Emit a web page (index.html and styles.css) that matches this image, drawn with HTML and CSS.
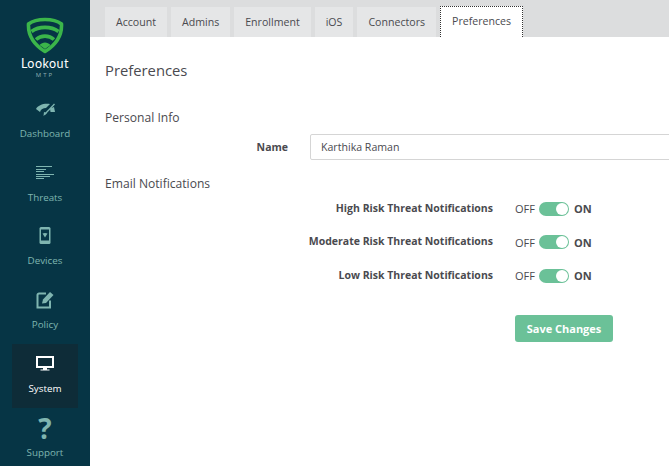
FILE: index.html
```html
<!DOCTYPE html>
<html lang="en">
<head>
    <meta charset="UTF-8">
    <title>Preferences</title>
    <link rel="stylesheet" href="styles.css">
</head>
<body>

    <nav class="sidebar">
        <div class="logo">
            <svg width="38" height="37" viewBox="0 0 38 37">
                <path d="M19 2.500C26 2.500 31.500 4 35.500 7C36 18 31 27 19 34.500C7 27 2 18 2.500 7C6.500 4 12 2.500 19 2.500Z" fill="none" stroke="#3bb54a" stroke-width="3.600" stroke-linejoin="round"/>
                <path d="M5.500 14.500C13 9 25 9 32.500 14.500" fill="none" stroke="#3bb54a" stroke-width="3.600"/>
                <path d="M10 22.500C15 18 23 18 28 22.500" fill="none" stroke="#3bb54a" stroke-width="3.600"/>
                <path d="M13.500 28C16.500 24.500 21.500 24.500 24.500 28L19 32Z" fill="#3bb54a"/>
            </svg>
            <div class="logo-name">Lookout</div>
            <div class="logo-sub">MTP</div>
        </div>
        <a class="nav-item">
            <svg width="20" height="18" viewBox="0 0 20 18">
                <path d="M1 9C3 5 9 3 15 4L11 8C8 8 6 9 5 12Z" fill="#7fb5b0"/>
                <path d="M8.500 16L9 12L12 13Z" fill="#7fb5b0"/>
                <path d="M9.500 14.500L19.500 4" stroke="#7fb5b0" stroke-width="1.300"/>
                <path d="M15 8.500L19 7L20 12H15.500Z" fill="#7fb5b0"/>
            </svg>
            <span>Dashboard</span>
        </a>
        <a class="nav-item">
            <svg width="20" height="18" viewBox="0 0 20 18" fill="none" stroke="#7fb5b0">
                <path d="M1 2.500H17M1 5.500H11M1 7.500H9M1 10.500H19M1 12.500H15M1 14.500H9"/>
            </svg>
            <span>Threats</span>
        </a>
        <a class="nav-item">
            <svg width="20" height="18" viewBox="0 0 20 18">
                <rect x="4.500" y="0" width="11" height="17" rx="1.500" fill="#7fb5b0"/>
                <rect x="6" y="2.500" width="8" height="11" fill="#063545"/>
                <path d="M7.500 6.500C9 5.700 11 5.700 12.500 6.500L10 10.500Z" fill="#7fb5b0"/>
            </svg>
            <span>Devices</span>
        </a>
        <a class="nav-item">
            <svg width="20" height="18" viewBox="0 0 20 18">
                <path d="M11 2.500H4C3.200 2.500 2.500 3.200 2.500 4V16.500H15V9.500" fill="none" stroke="#7fb5b0" stroke-width="2"/>
                <path d="M7 12.500L8 8.500L15 1L18.500 4L11 12Z" fill="#7fb5b0"/>
            </svg>
            <span>Policy</span>
        </a>
        <a class="nav-item active">
            <svg width="20" height="18" viewBox="0 0 20 18">
                <rect x="2" y="2" width="16" height="10" fill="none" stroke="#fff" stroke-width="2"/>
                <path d="M8 13H12V14.500H14.500V15.500H5.500V14.500H8Z" fill="#fff"/>
            </svg>
            <span>System</span>
        </a>
        <a class="nav-item">
            <div class="help">?</div>
            <span>Support</span>
        </a>
    </nav>

    <main class="content">
        <div class="tabs">
            <a class="tab">Account</a>
            <a class="tab">Admins</a>
            <a class="tab">Enrollment</a>
            <a class="tab">iOS</a>
            <a class="tab">Connectors</a>
            <a class="tab selected">Preferences</a>
        </div>

        <div class="page">
            <h1>Preferences</h1>

            <h2 class="info-title">Personal Info</h2>
            <div class="name-row">
                <label>Name</label>
                <input type="text" value="Karthika Raman">
            </div>

            <h2 class="email-title">Email Notifications</h2>
            <div class="setting">
                <label>High Risk Threat Notifications</label>
                <span class="off">OFF</span><span class="switch"></span><span class="on">ON</span>
            </div>
            <div class="setting">
                <label>Moderate Risk Threat Notifications</label>
                <span class="off">OFF</span><span class="switch"></span><span class="on">ON</span>
            </div>
            <div class="setting">
                <label>Low Risk Threat Notifications</label>
                <span class="off">OFF</span><span class="switch"></span><span class="on">ON</span>
            </div>

            <button class="save">Save Changes</button>
        </div>
    </main>

</body>
</html>
```

FILE: styles.css
```css
body {
    margin: 0;
    display: flex;
    height: 466px;
    overflow: hidden;
    font-family: 'Open Sans', sans-serif;
    font-size: 11px;
    color: #4a4a4f;
    background: #fff;
}
.sidebar {
    width: 90px;
    flex: none;
    background: #063545;
    display: flex;
    flex-direction: column;
    align-items: center;
}
.logo {
    height: 89px;
    flex: none;
    padding-top: 17px;
    box-sizing: border-box;
    display: flex;
    flex-direction: column;
    align-items: center;
    color: #fff;
}
.logo svg {
    display: block;
}
.logo-name {
    font-family: 'Lato', sans-serif;
    font-size: 12.500px;
    line-height: 15px;
    margin-top: 2px;
    letter-spacing: 0.5px;
}
.logo-sub {
    font-size: 6px;
    line-height: 8px;
    letter-spacing: 2px;
    color: #8fb0b4;
}
.nav-item {
    width: 66px;
    height: 63.800px;
    flex: none;
    display: flex;
    flex-direction: column;
    align-items: center;
    justify-content: flex-end;
    padding-bottom: 12px;
    box-sizing: border-box;
    color: #7fb5b0;
    font-size: 9.800px;
    line-height: 14px;
}
.nav-item svg {
    margin-bottom: 9px;
}
.nav-item.active {
    background: #0e2c38;
    color: #fff;
}
.help {
    font-size: 28px;
    font-weight: 700;
    line-height: 20px;
    height: 20px;
    margin-bottom: 8px;
}
.content {
    flex: 1;
    min-width: 0;
    overflow: hidden;
}
.tabs {
    height: 37px;
    background: #dcddde;
    display: flex;
    gap: 4px;
    padding: 7px 0 0 15px;
    box-sizing: border-box;
}
.tab {
    height: 30px;
    line-height: 30px;
    padding: 0 11px;
    background: #e5e6e7;
    color: #4a4a4f;
    font-size: 10.600px;
    box-sizing: border-box;
}
.tab.selected {
    background: #fff;
    line-height: 28px;
    margin-top: -1px;
    height: 31px;
    border: 1px dotted #333;
    border-bottom: none;
}
.page {
    padding-left: 15px;
}
h1 {
    margin: 0;
    padding-top: 22px;
    font-size: 14.800px;
    line-height: 22px;
    font-weight: 400;
}
h2 {
    margin: 0;
    font-size: 12.100px;
    line-height: 18px;
    font-weight: 400;
}
.info-title {
    margin-top: 28px;
}
.name-row {
    display: flex;
    align-items: center;
    margin-top: 7px;
}
.name-row label, .setting label {
    flex: none;
    font-weight: 700;
    text-align: right;
    font-size: 10.500px;
}
.name-row label {
    width: 183px;
}
.name-row input {
    margin-left: 22px;
    width: 400px;
    height: 26px;
    flex: none;
    box-sizing: border-box;
    border: 1px solid #d5d5d5;
    border-radius: 2px;
    padding: 0 10px;
    font-family: inherit;
    font-size: 10.600px;
    color: #4a4a4f;
}
.email-title {
    margin-top: 15px;
    line-height: 17px;
}
.setting {
    display: flex;
    align-items: center;
    height: 33.500px;
}
.setting label {
    width: 388px;
    margin-right: 22px;
    margin-top: -2px;
}
.off {
    width: 24px;
}
.on {
    font-weight: 700;
    margin-left: 5px;
}
.switch {
    width: 30px;
    height: 14px;
    border-radius: 7px;
    background: #6bc198;
    position: relative;
}
.switch::after {
    content: "";
    position: absolute;
    right: 1px;
    top: 1px;
    width: 12px;
    height: 12px;
    border-radius: 50%;
    background: #fff;
}
.save {
    display: block;
    margin: 22px 0 0 410px;
    width: 98px;
    height: 27px;
    border: none;
    border-radius: 3px;
    background: #6bc198;
    color: #fff;
    font-family: inherit;
    font-size: 11px;
    font-weight: 700;
}
```
